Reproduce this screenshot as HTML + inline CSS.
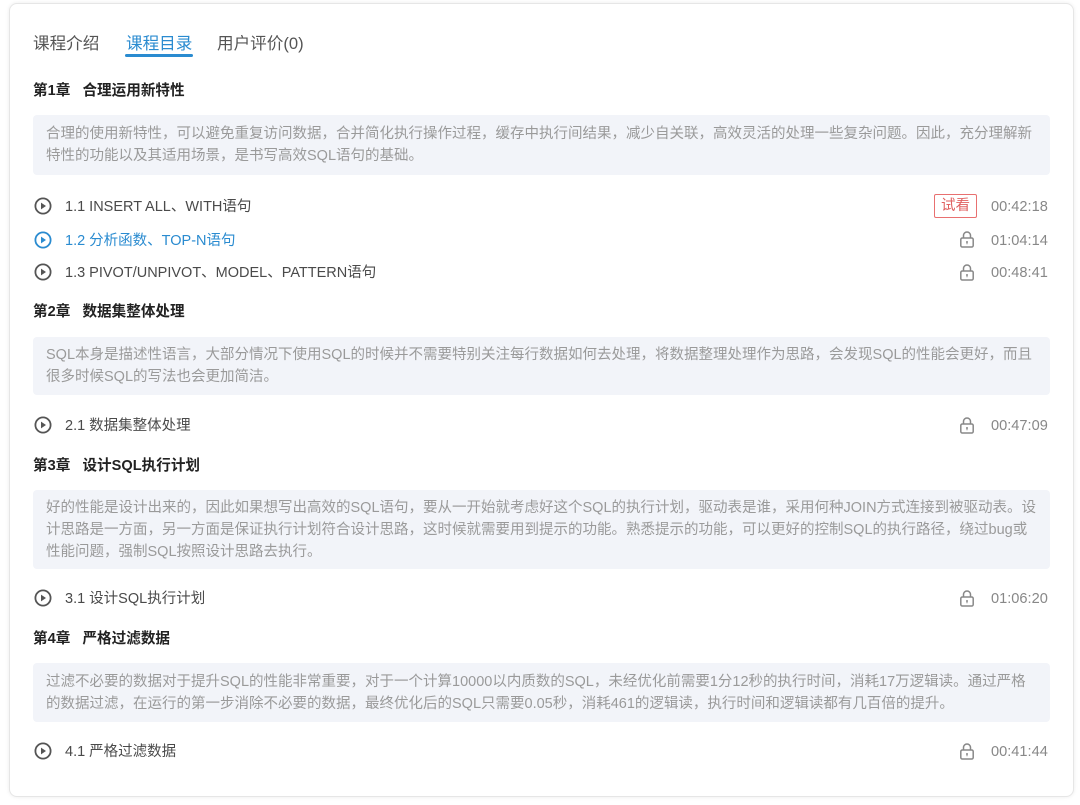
<!DOCTYPE html>
<html><head><meta charset="utf-8"><style>
body{margin:0;width:1080px;height:805px;background:#fff;font-family:"Liberation Sans","Noto Sans CJK SC",sans-serif;position:relative;overflow:hidden}
.card{position:absolute;left:9px;top:3px;width:1063px;height:792px;border:1px solid #e6e6e6;border-radius:8px;box-shadow:0 0 4px rgba(0,0,0,.08);background:#fff}
.a{position:absolute;white-space:nowrap}
.tab{font-size:16.6px;color:#555;top:30px}
.ch{font-size:14.6px;font-weight:bold;color:#222;left:33px}
.box{position:absolute;left:33px;width:1017px;background:#f2f4f9;border-radius:4px;color:#9a9a9a;font-size:14.5px;line-height:22px;padding:0 0 0 13px;box-sizing:border-box;white-space:nowrap}
.ls{font-size:14.5px;color:#4a4a4a;left:65px;margin-top:-2px}
.ic{position:absolute;left:34px}
.t{font-size:14.6px;color:#888;left:991px;margin-top:2px}
.lk{position:absolute;left:959px}
</style></head><body>
<div class="card"></div>
<div class="a tab" style="left:33px">课程介绍</div>
<div class="a tab" style="left:126px;color:#2a8bd0">课程目录</div>
<div style="position:absolute;left:125px;top:54px;width:68px;height:3px;background:#2a8bd0;border-radius:2px"></div>
<div class="a tab" style="left:217px">用户评价(0)</div>

<div class="a ch" style="top:79px">第1章&nbsp;&nbsp;&nbsp;合理运用新特性</div>
<div class="box" style="top:115px;height:60px;padding-top:8px">合理的使用新特性，可以避免重复访问数据，合并简化执行操作过程，缓存中执行间结果，减少自关联，高效灵活的处理一些复杂问题。因此，充分理解新<br>特性的功能以及其适用场景，是书写高效SQL语句的基础。</div>

<div class="a ls" style="top:197px">1.1 INSERT ALL、WITH语句</div>
<div class="a" style="left:934px;top:194px;width:41px;height:22px;border:1px solid #e87070;border-radius:2px;color:#e06060;font-size:14.5px;line-height:22px;text-align:center">试看</div>
<div class="a t" style="top:197px">00:42:18</div>
<div class="a ls" style="top:231px;color:#2a8bd0">1.2 分析函数、TOP-N语句</div>
<div class="a t" style="top:231px">01:04:14</div>
<div class="a ls" style="top:263px">1.3 PIVOT/UNPIVOT、MODEL、PATTERN语句</div>
<div class="a t" style="top:263px">00:48:41</div>

<div class="a ch" style="top:300px">第2章&nbsp;&nbsp;&nbsp;数据集整体处理</div>
<div class="box" style="top:337px;height:58px;padding-top:7px">SQL本身是描述性语言，大部分情况下使用SQL的时候并不需要特别关注每行数据如何去处理，将数据整理处理作为思路，会发现SQL的性能会更好，而且<br>很多时候SQL的写法也会更加简洁。</div>
<div class="a ls" style="top:416px">2.1 数据集整体处理</div>
<div class="a t" style="top:416px">00:47:09</div>

<div class="a ch" style="top:454px">第3章&nbsp;&nbsp;&nbsp;设计SQL执行计划</div>
<div class="box" style="top:490px;height:79px;padding-top:7px">好的性能是设计出来的，因此如果想写出高效的SQL语句，要从一开始就考虑好这个SQL的执行计划，驱动表是谁，采用何种JOIN方式连接到被驱动表。设<br>计思路是一方面，另一方面是保证执行计划符合设计思路，这时候就需要用到提示的功能。熟悉提示的功能，可以更好的控制SQL的执行路径，绕过bug或<br>性能问题，强制SQL按照设计思路去执行。</div>
<div class="a ls" style="top:589px">3.1 设计SQL执行计划</div>
<div class="a t" style="top:589px">01:06:20</div>

<div class="a ch" style="top:627px">第4章&nbsp;&nbsp;&nbsp;严格过滤数据</div>
<div class="box" style="top:663px;height:59px;padding-top:8px">过滤不必要的数据对于提升SQL的性能非常重要，对于一个计算10000以内质数的SQL，未经优化前需要1分12秒的执行时间，消耗17万逻辑读。通过严格<br>的数据过滤，在运行的第一步消除不必要的数据，最终优化后的SQL只需要0.05秒，消耗461的逻辑读，执行时间和逻辑读都有几百倍的提升。</div>
<div class="a ls" style="top:742px">4.1 严格过滤数据</div>
<div class="a t" style="top:742px">00:41:44</div>

<svg width="0" height="0" style="position:absolute"><defs>
<g id="pl"><circle cx="9" cy="9" r="7.6" fill="none" stroke="currentColor" stroke-width="1.8"/><path d="M7 5.6 L12 9 L7 12.4Z" fill="currentColor"/></g>
<g id="lock"><path d="M4.5 8V5.5a3.5 3.5 0 0 1 7 0V8" fill="none" stroke="#888" stroke-width="1.5"/><rect x="1.8" y="8" width="12.4" height="9" rx="1.5" fill="none" stroke="#888" stroke-width="1.5"/><circle cx="8" cy="12" r="1" fill="#888"/><path d="M8 12v2.2" stroke="#888" stroke-width="1"/></g>
</defs></svg>
<svg class="ic" style="top:197px;color:#555" width="18" height="18"><use href="#pl"/></svg>
<svg class="ic" style="top:231px;color:#2a8bd0" width="18" height="18"><use href="#pl"/></svg>
<svg class="ic" style="top:263px;color:#555" width="18" height="18"><use href="#pl"/></svg>
<svg class="ic" style="top:416px;color:#555" width="18" height="18"><use href="#pl"/></svg>
<svg class="ic" style="top:589px;color:#555" width="18" height="18"><use href="#pl"/></svg>
<svg class="ic" style="top:742px;color:#555" width="18" height="18"><use href="#pl"/></svg>
<svg class="lk" style="top:230px" width="16" height="19"><use href="#lock"/></svg>
<svg class="lk" style="top:263px" width="16" height="19"><use href="#lock"/></svg>
<svg class="lk" style="top:416px" width="16" height="19"><use href="#lock"/></svg>
<svg class="lk" style="top:589px" width="16" height="19"><use href="#lock"/></svg>
<svg class="lk" style="top:742px" width="16" height="19"><use href="#lock"/></svg>
</body></html>
